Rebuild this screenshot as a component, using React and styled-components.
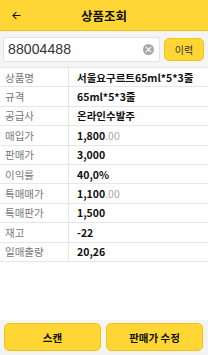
import React from "react";
import styled, { createGlobalStyle } from "styled-components";

const Global = createGlobalStyle`
  html, body { margin: 0; padding: 0; }
  body { font-family: "Noto Sans CJK KR", "Noto Sans", sans-serif; background: #fff; }
  * { box-sizing: border-box; }
`;

const Page = styled.div`
  width: 208px;
  height: 355px;
  display: flex;
  flex-direction: column;
  background: #fff;
  overflow: hidden;
`;

const Header = styled.div`
  height: 31px;
  flex: none;
  background: #ffd633;
  border-bottom: 1px solid #f0c419;
  display: flex;
  align-items: center;
  position: relative;
`;

const Back = styled.div`
  width: 30px;
  padding-left: 11px;
  display: flex;
  align-items: center;
`;

const Title = styled.div`
  position: absolute;
  left: 0;
  right: 0;
  text-align: center;
  font-size: 12.5px;
  font-weight: 700;
  color: #111;
  pointer-events: none;
`;

const SearchBar = styled.div`
  flex: none;
  height: 36px;
  background: #f4f4f4;
  display: flex;
  align-items: center;
  padding: 0 4px 0 3px;
  gap: 4px;
`;

const InputBox = styled.div`
  flex: 1;
  height: 25px;
  background: #fff;
  border: 1px solid #e2e2e2;
  border-radius: 2px;
  display: flex;
  align-items: center;
  padding: 0 5px 0 4px;
`;

const InputText = styled.div`
  flex: 1;
  font-family: "Liberation Sans", "Noto Sans", sans-serif;
  font-size: 14px;
  color: #333;
  letter-spacing: 0.1px;
`;

const HistoryBtn = styled.div`
  width: 40px;
  height: 23px;
  background: #ffd633;
  border: 1px solid #f2c31a;
  border-radius: 5px;
  display: flex;
  align-items: center;
  justify-content: center;
  font-size: 10px;
  color: #333;
`;

const Table = styled.div`
  flex: none;
  border-top: 1px solid #e6e6e6;
`;

const Row = styled.div`
  display: grid;
  grid-template-columns: 69px 1fr;
  height: 19.4px;
  border-bottom: 1px solid #e6e6e6;
`;

const Label = styled.div`
  border-right: 1px solid #e6e6e6;
  padding-left: 5px;
  display: flex;
  align-items: center;
  font-size: 10.5px;
  color: #777;
`;

const Value = styled.div`
  padding-left: 8px;
  display: flex;
  align-items: center;
  font-size: 10.5px;
  font-weight: 700;
  color: #111;
  white-space: nowrap;
`;

const Faint = styled.span`
  font-weight: 400;
  color: #aaa;
`;

const Spacer = styled.div`
  flex: 1;
`;

const Footer = styled.div`
  flex: none;
  height: 35px;
  background: #f4f4f4;
  display: flex;
  gap: 5px;
  padding: 3px 5px 4px 4px;
`;

const FooterBtn = styled.div`
  flex: 1;
  background: #ffd633;
  border: 1px solid #f2c31a;
  border-radius: 5px;
  display: flex;
  align-items: center;
  justify-content: center;
  font-size: 10.5px;
  font-weight: 700;
  color: #111;
`;

const rows = [
  ["상품명", "서울요구르트65ml*5*3줄"],
  ["규격", "65ml*5*3줄"],
  ["공급사", "온라인수발주"],
  ["매입가", <>1,800<Faint>.00</Faint></>],
  ["판매가", "3,000"],
  ["이익률", "40,0%"],
  ["특매매가", <>1,100<Faint>.00</Faint></>],
  ["특매판가", "1,500"],
  ["재고", "-22"],
  ["일매출량", "20,26"],
];

export default function App() {
  return (
    <>
      <Global />
      <Page>
        <Header>
          <Back>
            <svg width="11" height="11" viewBox="0 0 24 24" fill="none" stroke="#111" strokeWidth="2.2" strokeLinecap="round" strokeLinejoin="round">
              <path d="M20 12H4M11 5l-7 7 7 7" />
            </svg>
          </Back>
          <Title>상품조회</Title>
        </Header>
        <SearchBar>
          <InputBox>
            <InputText>88004488</InputText>
            <svg width="11" height="11" viewBox="0 0 12 12">
              <circle cx="6" cy="6" r="6" fill="#a9a9a9" />
              <path d="M3.6 3.6l4.8 4.8M8.4 3.6l-4.8 4.8" stroke="#fff" strokeWidth="1.3" strokeLinecap="round" />
            </svg>
          </InputBox>
          <HistoryBtn>이력</HistoryBtn>
        </SearchBar>
        <Table>
          {rows.map(([k, v]) => (
            <Row key={k}>
              <Label>{k}</Label>
              <Value>{v}</Value>
            </Row>
          ))}
        </Table>
        <Spacer />
        <Footer>
          <FooterBtn>스캔</FooterBtn>
          <FooterBtn>판매가 수정</FooterBtn>
        </Footer>
      </Page>
    </>
  );
}
